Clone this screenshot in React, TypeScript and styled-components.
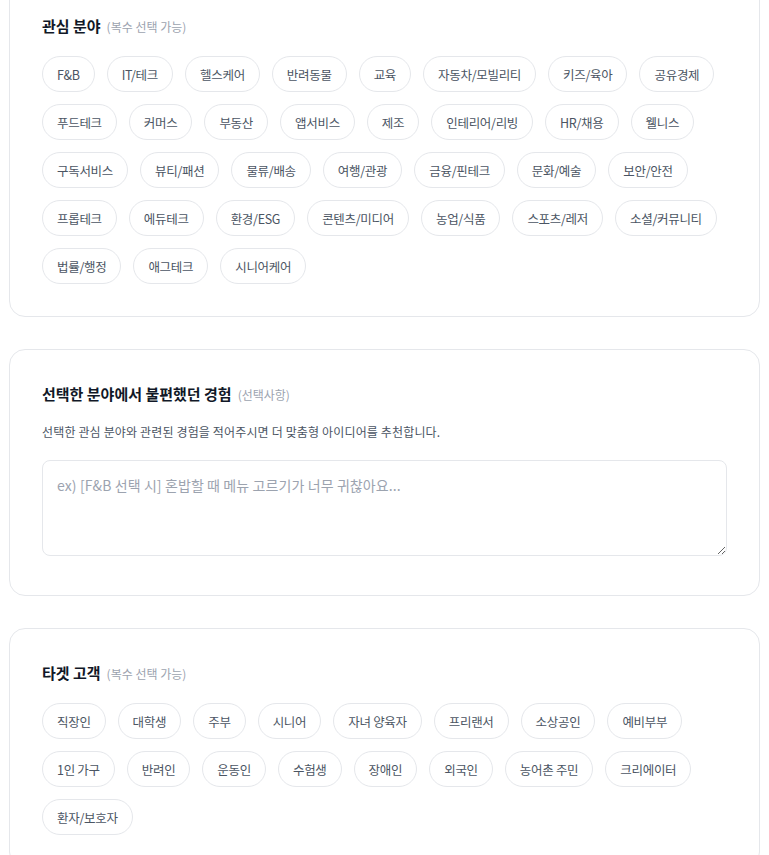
import { createGlobalStyle, styled } from "styled-components";

const GlobalStyle = createGlobalStyle`
  body {
    margin: 0;
    background: #ffffff;
    font-family: "Noto Sans CJK KR", "Noto Sans", sans-serif;
    color: #111827;
  }
`;

const interests = [
  "F&B", "IT/테크", "헬스케어", "반려동물", "교육", "자동차/모빌리티", "키즈/육아", "공유경제",
  "푸드테크", "커머스", "부동산", "앱서비스", "제조", "인테리어/리빙", "HR/채용", "웰니스",
  "구독서비스", "뷰티/패션", "물류/배송", "여행/관광", "금융/핀테크", "문화/예술", "보안/안전",
  "프롭테크", "에듀테크", "환경/ESG", "콘텐츠/미디어", "농업/식품", "스포츠/레저", "소셜/커뮤니티",
  "법률/행정", "애그테크", "시니어케어",
];

const targets = [
  "직장인", "대학생", "주부", "시니어", "자녀 양육자", "프리랜서", "소상공인", "예비부부",
  "1인 가구", "반려인", "운동인", "수험생", "장애인", "외국인", "농어촌 주민", "크리에이터",
  "환자/보호자",
];

const Page = styled.main`
  display: flex;
  flex-direction: column;
  gap: 32px;
  padding: 0 9px 40px;
  margin-top: -19px;
`;

const Card = styled.section`
  background: #ffffff;
  border: 1px solid #e5e7eb;
  border-radius: 16px;
  padding: 32px;
`;

const Title = styled.h2`
  margin: 0 0 17px;
  font-size: 15px;
  line-height: 24px;
  font-weight: 700;
  color: #111827;
`;

const Hint = styled.span`
  margin-left: 6px;
  font-size: 12px;
  font-weight: 400;
  color: #9ca3af;
`;

const Description = styled.p`
  margin: -1px 0 19px;
  font-size: 12px;
  line-height: 18px;
  letter-spacing: 0.15px;
  color: #4b5563;
`;

const ChipList = styled.div`
  display: flex;
  flex-wrap: wrap;
  gap: 12px;
`;

const Chip = styled.button`
  height: 36px;
  padding: 0 14px;
  border: 1px solid #e5e7eb;
  border-radius: 999px;
  background: #ffffff;
  font-family: inherit;
  font-size: 12.5px;
  letter-spacing: -0.3px;
  color: #4b5563;
  cursor: pointer;
`;

const TextArea = styled.textarea`
  display: block;
  box-sizing: border-box;
  width: 100%;
  height: 96px;
  margin-bottom: 7px;
  padding: 13px 14px;
  border: 1px solid #e5e7eb;
  border-radius: 8px;
  font-family: inherit;
  font-size: 14px;
  line-height: 22px;
  letter-spacing: 0.1px;
  color: #111827;
  &::placeholder {
    color: #9ca3af;
  }
`;

const App = () => (
  <>
    <GlobalStyle />
    <Page>
      <Card>
        <Title>
          관심 분야<Hint>(복수 선택 가능)</Hint>
        </Title>
        <ChipList>
          {interests.map((item) => (
            <Chip key={item}>{item}</Chip>
          ))}
        </ChipList>
      </Card>
      <Card>
        <Title>
          선택한 분야에서 불편했던 경험<Hint>(선택사항)</Hint>
        </Title>
        <Description>선택한 관심 분야와 관련된 경험을 적어주시면 더 맞춤형 아이디어를 추천합니다.</Description>
        <TextArea placeholder="ex) [F&B 선택 시] 혼밥할 때 메뉴 고르기가 너무 귀찮아요..." />
      </Card>
      <Card>
        <Title>
          타겟 고객<Hint>(복수 선택 가능)</Hint>
        </Title>
        <ChipList>
          {targets.map((item) => (
            <Chip key={item}>{item}</Chip>
          ))}
        </ChipList>
      </Card>
    </Page>
  </>
);

export default App;
